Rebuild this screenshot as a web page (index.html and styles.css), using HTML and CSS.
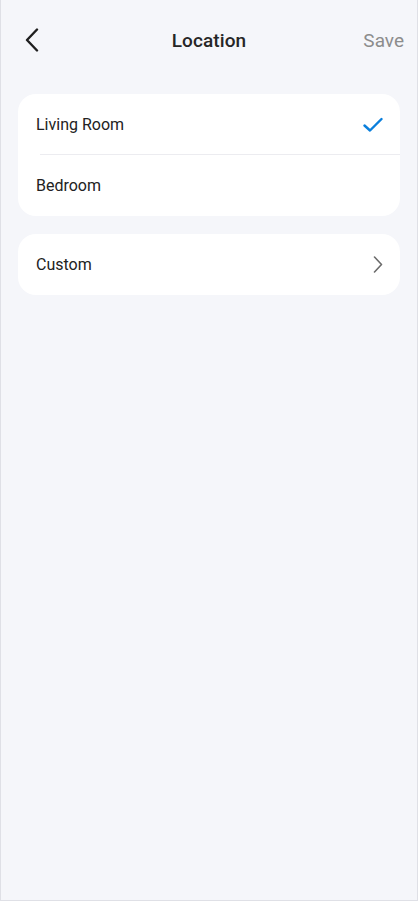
FILE: index.html
```html
<!DOCTYPE html>
<html lang="en">
<head>
    <meta charset="UTF-8">
    <meta name="viewport" content="width=device-width, initial-scale=1.0">
    <title>Location</title>
    <link rel="stylesheet" href="styles.css">
</head>
<body>
    <div class="screen">
        <header class="topbar">
            <button class="back" aria-label="Back">
                <svg width="14" height="24" viewBox="0 0 14 24">
                    <path d="M12 1.5 L2 12 L12 22.5" fill="none" stroke="#1f1f1f" stroke-width="2.4" stroke-linecap="round" stroke-linejoin="round"/>
                </svg>
            </button>
            <h1>Location</h1>
            <span class="save">Save</span>
        </header>

        <!-- Lista de locais -->
        <div class="card">
            <div class="row">
                <span>Living Room</span>
                <svg width="20" height="16" viewBox="0 0 20 16">
                    <path d="M1.5 8.5 L7 13.5 L18.5 2" fill="none" stroke="#0a7fdc" stroke-width="2.4" stroke-linecap="round" stroke-linejoin="round"/>
                </svg>
            </div>
            <div class="divider"></div>
            <div class="row">
                <span>Bedroom</span>
            </div>
        </div>

        <div class="card">
            <div class="row">
                <span>Custom</span>
                <svg width="10" height="17" viewBox="0 0 10 17">
                    <path d="M1.5 1 L8.5 8.5 L1.5 16" fill="none" stroke="#6b6b6b" stroke-width="1.6" stroke-linecap="round" stroke-linejoin="round"/>
                </svg>
            </div>
        </div>
    </div>
</body>
</html>
```

FILE: styles.css
```css
* {
    box-sizing: border-box;
}

body {
    margin: 0;
    padding: 0;
    font-family: Roboto, "Noto Sans", sans-serif;
    background-color: #f5f6fa;
    color: #222222;
}

.screen {
    height: 901px;
    border: 1px solid #dfe0e6;
    border-top: none;
    background-color: #f5f6fa;
}

/* Barra superior */
.topbar {
    height: 80px;
    display: grid;
    grid-template-columns: 1fr auto 1fr;
    align-items: center;
    padding: 0 13px;
}

.topbar h1 {
    margin: 0;
    font-size: 19px;
    font-weight: 500;
    color: #262626;
    letter-spacing: 0.1px;
}

.back {
    background: none;
    border: none;
    padding: 0 0 0 11px;
    display: flex;
    align-items: center;
    cursor: pointer;
}

.save {
    justify-self: end;
    font-size: 19px;
    color: #8c8c8c;
}

/* Cartões */
.card {
    background-color: #ffffff;
    border-radius: 18px;
    margin: 14px 17px 0 17px;
    overflow: hidden;
}

.card + .card {
    margin-top: 18px;
}

.row {
    height: 61px;
    display: flex;
    align-items: center;
    justify-content: space-between;
    padding: 0 17px 0 18px;
    font-size: 16px;
}

.divider {
    height: 1px;
    background-color: #ececf0;
    margin-left: 22px;
    margin-top: -1px;
}
```
